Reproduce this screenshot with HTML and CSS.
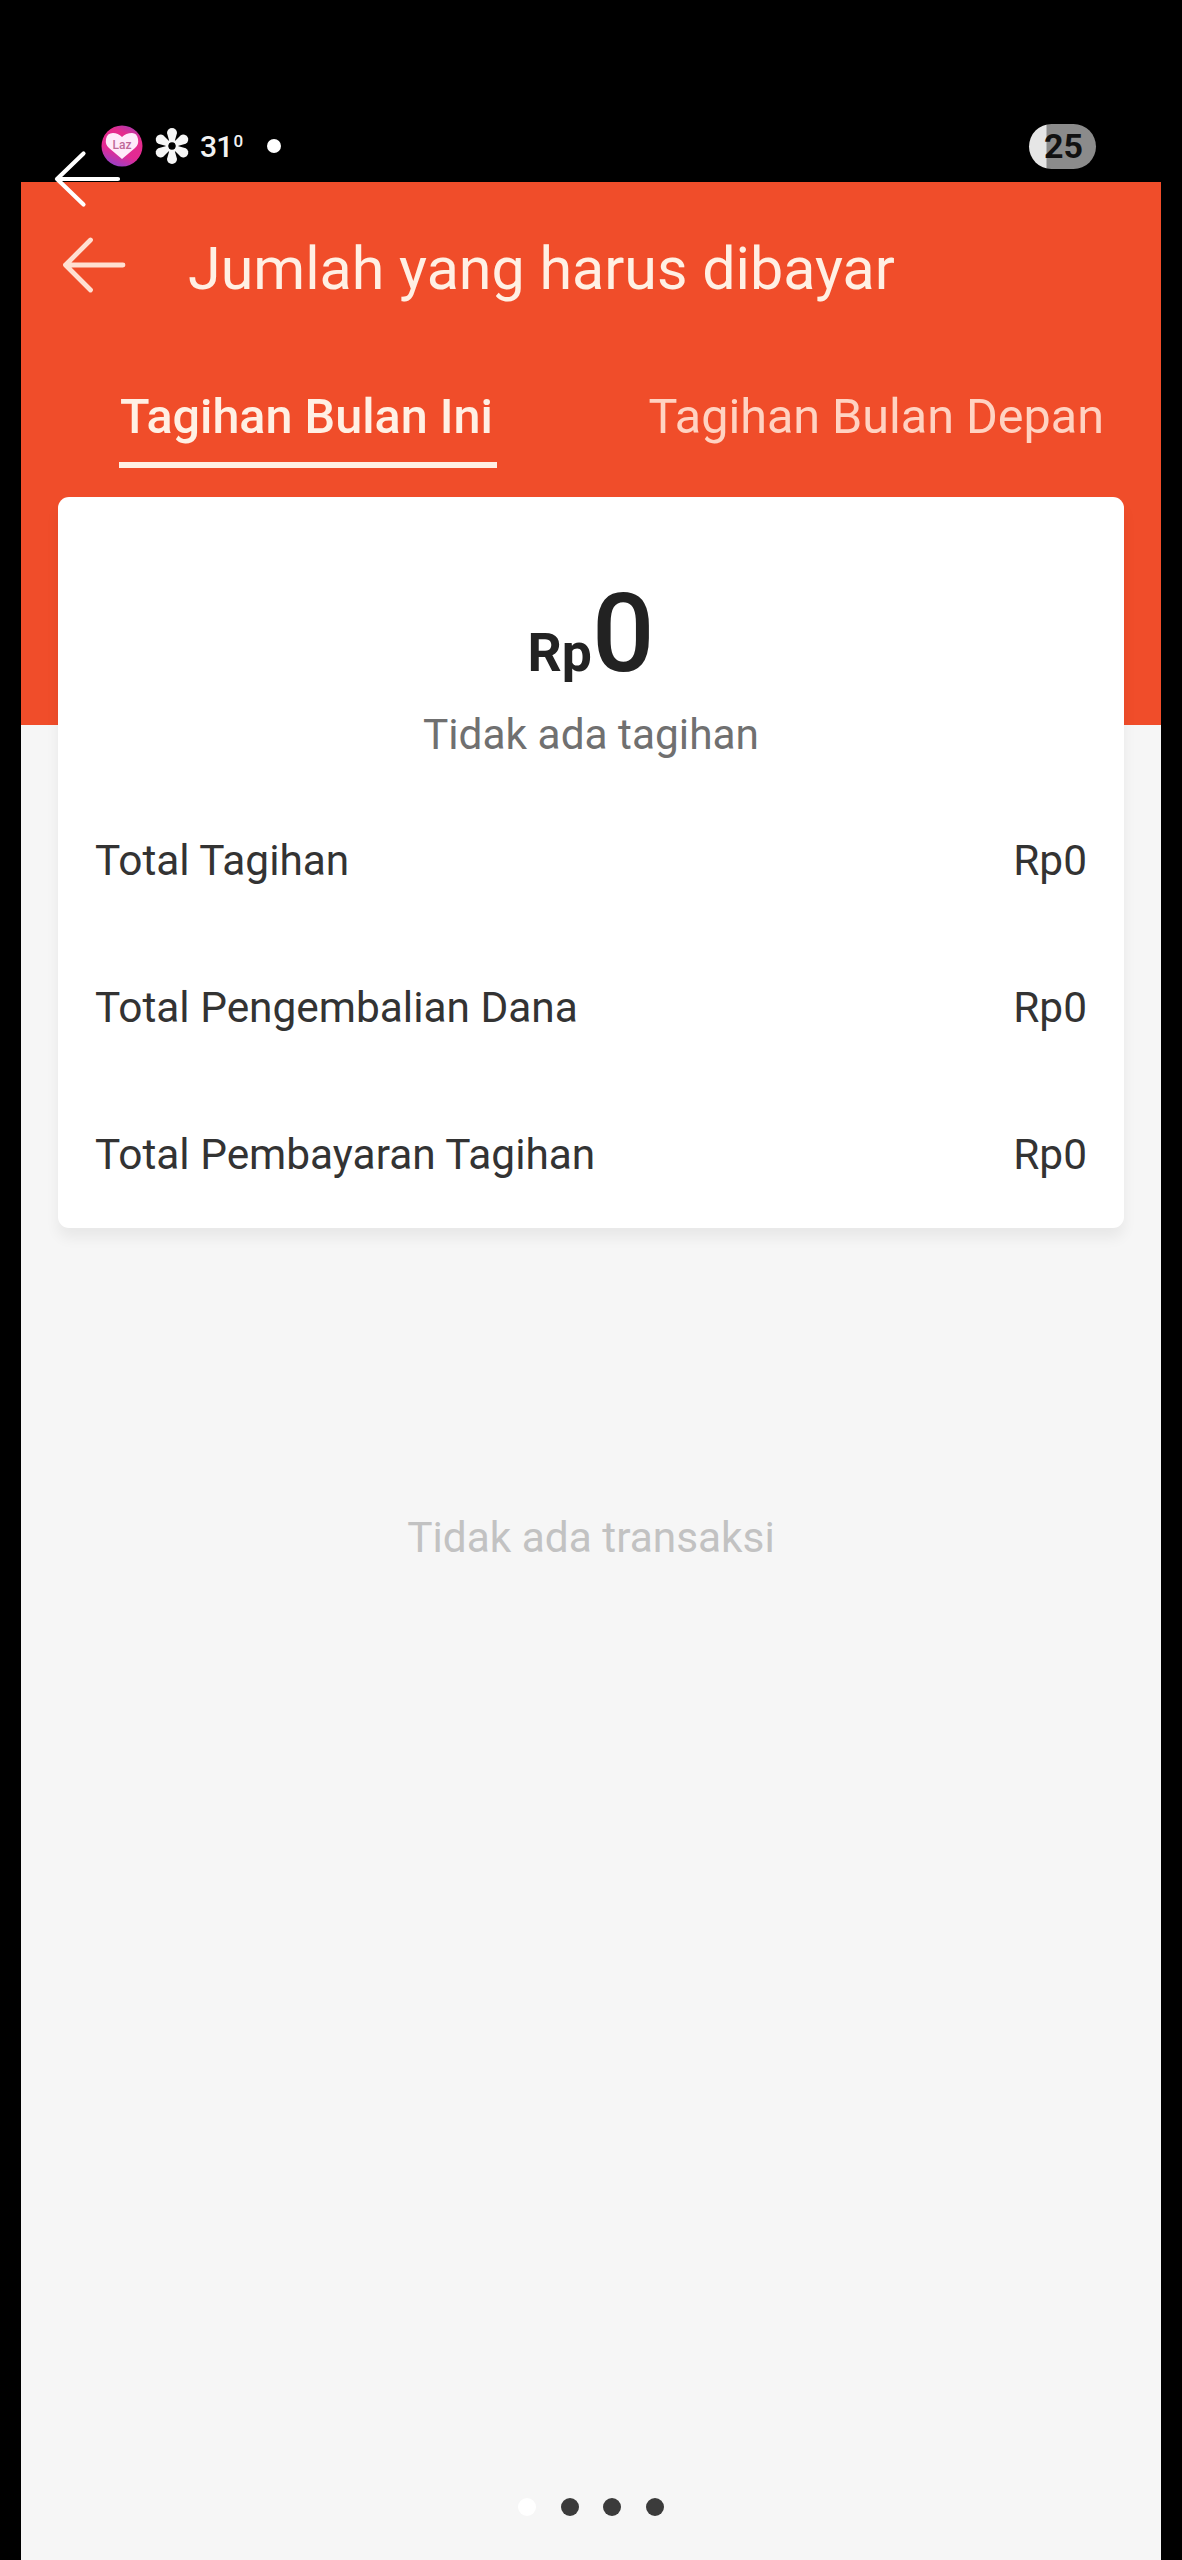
FILE: index.html
```html
<!DOCTYPE html>
<html lang="id">
<head>
<meta charset="utf-8">
<title>Jumlah yang harus dibayar</title>
<link rel="stylesheet" href="styles.css">
</head>
<body>
<div class="status">
  <svg class="status-heart" width="42" height="42" viewBox="0 0 42 42">
    <defs><linearGradient id="badge" x1="0.8" y1="0" x2="0.4" y2="1"><stop offset="0" stop-color="#a43ab4"/><stop offset="0.25" stop-color="#e52c8c"/><stop offset="0.7" stop-color="#e32a94"/><stop offset="1" stop-color="#9c3fc4"/></linearGradient></defs>
    <circle cx="21" cy="21" r="20.5" fill="url(#badge)"/>
    <path d="M21 34 L8 23 Q4 20 5 14 Q6 8 12 8 Q17 8 21 12 Q25 8 31 8 Q36 8 37 14 Q38 20 34 23 Z" fill="#ffeafa"/>
    <text x="21" y="24" text-anchor="middle" class="heart-text">Laz</text>
  </svg>
  <svg class="status-flower" width="38" height="38" viewBox="-19 -19 38 38">
    <g fill="#f6f6f6">
      <path id="petal" d="M-2.500 -4 L-5 -13 A5 5 0 1 1 5 -13 L2.500 -4 Z"/>
      <use href="#petal" transform="rotate(60)"/><use href="#petal" transform="rotate(120)"/>
      <use href="#petal" transform="rotate(180)"/><use href="#petal" transform="rotate(240)"/>
      <use href="#petal" transform="rotate(300)"/>
    </g>
    <circle r="5" fill="none" stroke="#f6f6f6" stroke-width="2.500"/>
  </svg>
  <span class="temp">31<span class="degree">0</span></span>
  <span class="status-dot"></span>
  <span class="battery">25</span>
</div>
<svg class="viewer-back" width="70" height="60" viewBox="0 0 70 60"><path d="M67 30H6M32.500 4.500L6 30L32.500 55.500" fill="none" stroke="#fff" stroke-width="4.200" stroke-linecap="round" stroke-linejoin="round"/></svg>
<main class="screen">
  <header class="header">
    <div class="title-bar">
      <svg class="back" width="68" height="60" viewBox="0 0 68 60"><path d="M62 30H4.500M29.500 5L4.500 30L29.500 55" fill="none" stroke="#ffe0d2" stroke-width="4.800" stroke-linecap="round" stroke-linejoin="round"/></svg>
      <h1 class="title">Jumlah yang harus dibayar</h1>
    </div>
    <nav class="tabs">
      <span class="tab tab-active">Tagihan Bulan Ini</span>
      <span class="tab">Tagihan Bulan Depan</span>
    </nav>
  </header>
  <section class="card">
    <div class="amount"><span class="currency">Rp</span>0</div>
    <div class="amount-note">Tidak ada tagihan</div>
    <div class="row"><span>Total Tagihan</span><span>Rp0</span></div>
    <div class="row"><span>Total Pengembalian Dana</span><span>Rp0</span></div>
    <div class="row"><span>Total Pembayaran Tagihan</span><span>Rp0</span></div>
  </section>
  <p class="empty">Tidak ada transaksi</p>
  <div class="pager"><i class="dot dot-active"></i><i class="dot"></i><i class="dot"></i><i class="dot"></i></div>
</main>
</body>
</html>
```
FILE: styles.css
```css
* { box-sizing: border-box; }
body {
  margin: 0;
  width: 1182px;
  height: 2560px;
  background: #000;
  font-family: Roboto, "Liberation Sans", sans-serif;
  position: relative;
  overflow: hidden;
}
.status {
  height: 182px;
  padding: 110px 86px 0 101px;
  display: flex;
  align-items: center;
}
.heart-text { font-size: 12px; font-weight: 500; fill: #c06898; }
.status-flower { margin-left: 10px; }
.temp {
  margin: 0 0 4px 9px;
  color: #f2f2f2;
  font-size: 30px;
  font-weight: 500;
  line-height: 40px;
  letter-spacing: -0.8px;
  width: 44px;
  white-space: nowrap;
}
.degree { font-size: 17px; vertical-align: 10px; margin-left: 1px; }
.status-dot {
  width: 14px;
  height: 14px;
  border-radius: 50%;
  background: #fff;
  margin-left: 23px;
}
.battery {
  margin-left: auto;
  width: 67px;
  height: 45px;
  border-radius: 23px;
  background: linear-gradient(90deg, #e6e6e6 17px, #8b8b8b 18px);
  color: #111;
  font-size: 34px;
  font-weight: 700;
  line-height: 44px;
  padding-left: 15px;
}
.viewer-back { position: absolute; left: 51px; top: 149px; }
.screen {
  margin: 0 21px;
  width: 1140px;
  height: 2378px;
  background: #f6f6f6;
  display: flex;
  flex-direction: column;
}
.header {
  height: 543px;
  flex: none;
  background: #f04d2a;
  padding-top: 47px;
}
.title-bar { display: flex; height: 80px; padding-left: 40px; }
.back { margin-top: 6px; }
.title {
  margin: 0 0 0 59px;
  font-size: 59.2px;
  line-height: 79px;
  font-weight: 400;
  color: #fff0e4;
}
.tabs {
  display: flex;
  justify-content: space-between;
  padding: 56px 57px 0 98px;
}
.tab {
  height: 103px;
  font-size: 48.5px;
  line-height: 104px;
  color: #ffd3c2;
}
.tab-active {
  width: 378px;
  padding-left: 1px;
  font-weight: 500;
  color: #fff0e4;
  border-bottom: 6px solid #fff0e4;
}
.card {
  flex: none;
  width: 1066px;
  height: 731px;
  margin: -228px 0 0 37px;
  padding: 76px 37px 0;
  background: #fff;
  border-radius: 11px;
  box-shadow: 0 10px 14px rgba(0, 0, 0, 0.06);
  color: #333;
}
.amount {
  height: 120px;
  line-height: 122px;
  text-align: center;
  font-size: 110px;
  font-weight: 500;
  color: #222;
}
.currency { font-size: 53.5px; font-weight: 700; }
.amount-note {
  margin-top: 11px;
  height: 60px;
  line-height: 61px;
  text-align: center;
  font-size: 42.4px;
  color: #707070;
}
.row {
  display: flex;
  justify-content: space-between;
  height: 147px;
  line-height: 148px;
  font-size: 42.4px;
}
.amount-note + .row { margin-top: 23px; }
.empty {
  margin: 279px 0 0;
  line-height: 61px;
  text-align: center;
  font-size: 42.4px;
  color: #c2c2c2;
}
.pager {
  display: flex;
  justify-content: center;
  gap: 24.7px;
  margin: auto 0 44px;
}
.dot { width: 18px; height: 18px; border-radius: 50%; background: #3b3b3b; }
.dot-active { background: #fff; }
```
